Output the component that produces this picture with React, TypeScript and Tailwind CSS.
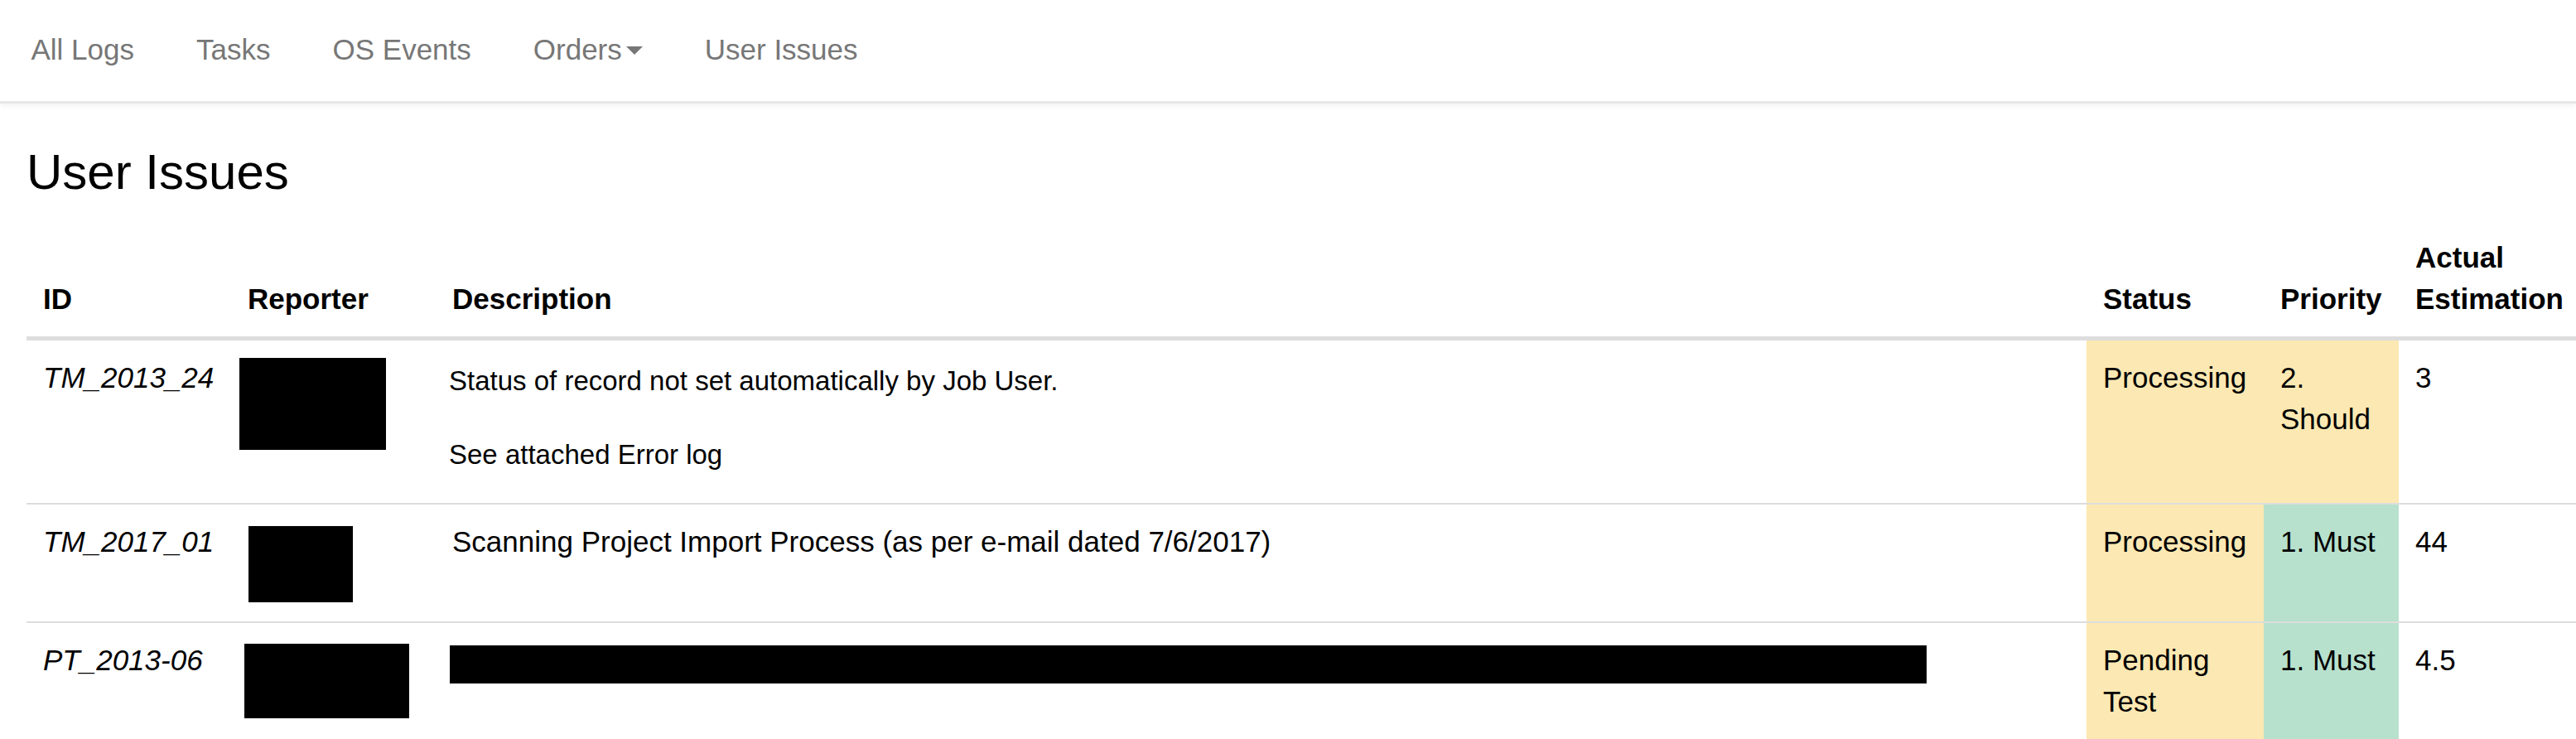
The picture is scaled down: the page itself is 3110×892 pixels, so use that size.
import React from 'react';

const navItems = ['All Logs', 'Tasks', 'OS Events', 'Orders', 'User Issues'];

const Cell: React.FC<{ className?: string; children?: React.ReactNode }> = ({ className = '', children }) => (
  <td className={`align-top p-[20px] text-[35px] leading-[50px] text-black ${className}`}>{children}</td>
);

const Redacted: React.FC<{ className: string }> = ({ className }) => <div className={`bg-black ${className}`} />;

const App: React.FC = () => {
  return (
    <div className="w-[3110px] min-h-[892px] bg-white overflow-hidden font-['Liberation_Sans',Arial,sans-serif]">
      <nav className="h-[125px] flex items-center pb-[3px] bg-white border-b-[3px] border-[#e7e7e7] shadow-[0_3px_6px_rgba(0,0,0,0.05)]">
        {navItems.map((item) => (
          <a key={item} className="px-[37.5px] text-[35px] leading-[50px] text-[#777] flex items-center">
            {item}
            {item === 'Orders' && (
              <span className="ml-[5px] mt-[2px] inline-block w-0 h-0 border-t-[10px] border-x-[10px] border-t-[#777] border-x-transparent" />
            )}
          </a>
        ))}
      </nav>

      <div className="pl-[32px]">
        <h3 className="mt-[50px] mb-[25px] text-[60px] leading-[66px] font-normal text-black">User Issues</h3>

        <table className="w-[3078px] table-fixed border-separate border-spacing-0">
          <colgroup>
            <col className="w-[247px]" />
            <col className="w-[247px]" />
            <col className="w-[1993px]" />
            <col className="w-[214px]" />
            <col className="w-[163px]" />
            <col className="w-[214px]" />
          </colgroup>
          <thead>
            <tr className="text-left">
              {['ID', 'Reporter', 'Description', 'Status', 'Priority', 'Actual Estimation'].map((h, i) => (
                <th
                  key={h}
                  className={`align-bottom p-[20px] ${i === 5 ? 'pr-0' : ''} text-[35px] leading-[50px] font-bold text-black border-b-[5px] border-[#ddd]`}
                >
                  {h}
                </th>
              ))}
            </tr>
          </thead>
          <tbody>
            <tr className="h-[196px]">
              <Cell className="italic">TM_2013_24</Cell>
              <Cell>
                <Redacted className="w-[177px] h-[111px] mt-[1px] -ml-[10px]" />
              </Cell>
              <Cell>
                <p className="text-[33px] leading-[40px] mt-[9px] -ml-[4px]">Status of record not set automatically by Job User.</p>
                <p className="text-[33px] leading-[40px] mt-[49px] -ml-[4px]">See attached Error log</p>
              </Cell>
              <Cell className="bg-[#fce8b2] pr-[16px]">Processing</Cell>
              <Cell className="bg-[#fce8b2]">2. Should</Cell>
              <Cell>3</Cell>
            </tr>
            <tr className="h-[143px]">
              <Cell className="italic border-t-2 border-[#ddd]">TM_2017_01</Cell>
              <Cell className="border-t-2 border-[#ddd]">
                <Redacted className="w-[126px] h-[92px] mt-[6px] ml-[1px]" />
              </Cell>
              <Cell className="border-t-2 border-[#ddd]">
                <span className="text-[35px]">Scanning Project Import Process (as per e-mail dated 7/6/2017)</span>
              </Cell>
              <Cell className="bg-[#fce8b2] pr-[16px] border-t-2 border-[#ddd]">Processing</Cell>
              <Cell className="bg-[#b7e1cd] border-t-2 border-[#ddd]">1. Must</Cell>
              <Cell className="border-t-2 border-[#ddd]">44</Cell>
            </tr>
            <tr className="h-[144px]">
              <Cell className="italic border-y-2 border-[#ddd]">PT_2013-06</Cell>
              <Cell className="border-y-2 border-[#ddd]">
                <Redacted className="w-[199px] h-[90px] mt-[5px] -ml-[4px]" />
              </Cell>
              <Cell className="border-y-2 border-[#ddd]">
                <Redacted className="w-[1783px] h-[46px] mt-[7px] -ml-[3px]" />
              </Cell>
              <Cell className="bg-[#fce8b2] pr-[16px] border-y-2 border-[#ddd]">Pending Test</Cell>
              <Cell className="bg-[#b7e1cd] border-y-2 border-[#ddd]">1. Must</Cell>
              <Cell className="border-y-2 border-[#ddd]">4.5</Cell>
            </tr>
          </tbody>
        </table>
      </div>
    </div>
  );
};

export default App;
